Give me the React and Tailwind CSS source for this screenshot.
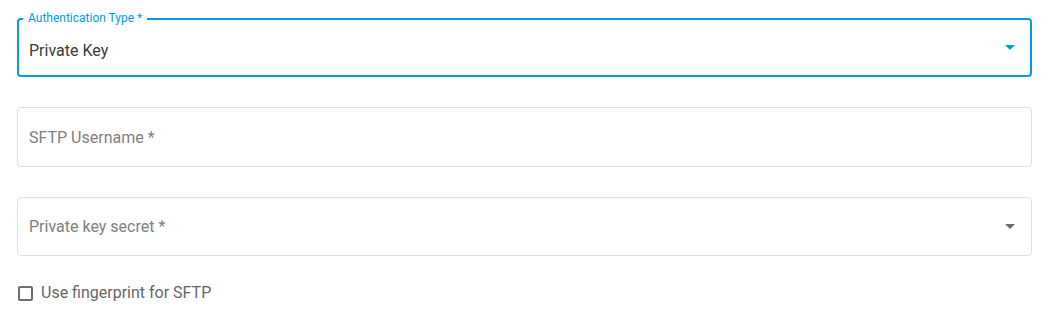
import React from "react";

function Caret({ className }) {
  return (
    <svg width="10" height="5" viewBox="0 0 10 5" className={className}>
      <path d="M0 0 L10 0 L5 5 Z" fill="currentColor" />
    </svg>
  );
}

export default function App() {
  return (
    <div
      className="bg-white w-[1048px] h-[334px] pt-[18px] pl-[17px]"
      style={{ fontFamily: "Roboto, 'Liberation Sans', sans-serif" }}
    >
      <div className="w-[1015px] flex flex-col gap-[30px]">
        {/* Authentication type - focused select */}
        <div className="relative h-[59px] rounded-[4px] border-2 border-[#039be5] flex items-center pl-[10px] pr-[15px] pt-[7px]">
          <span className="absolute -top-[9px] left-[4px] bg-white px-[5px] text-[12px] leading-[14px] text-[#039be5]">
            Authentication Type *
          </span>
          <span className="flex-1 text-[16px] text-[#3a3a3a]">Private Key</span>
          <Caret className="text-[#039be5] -mt-[7px]" />
        </div>

        {/* SFTP Username */}
        <div className="h-[60px] rounded-[4px] border border-[#e0e0e0] flex items-center pl-[11px] pr-[16px] pt-[1px]">
          <span className="text-[16px] text-[#808080]">SFTP Username *</span>
        </div>

        {/* Private key secret */}
        <div className="h-[59px] rounded-[4px] border border-[#e0e0e0] flex items-center pl-[11px] pr-[16px]">
          <span className="flex-1 text-[16px] text-[#808080]">Private key secret *</span>
          <Caret className="text-[#6b6b6b]" />
        </div>

        {/* Checkbox */}
        <label className="flex items-center gap-[8px] pl-[1px] -mt-[5px]">
          <span className="w-[15px] h-[15px] rounded-[2px] border-2 border-[#6f6f6f] bg-white" />
          <span className="text-[16px] text-[#666666]">Use fingerprint for SFTP</span>
        </label>
      </div>
    </div>
  );
}
